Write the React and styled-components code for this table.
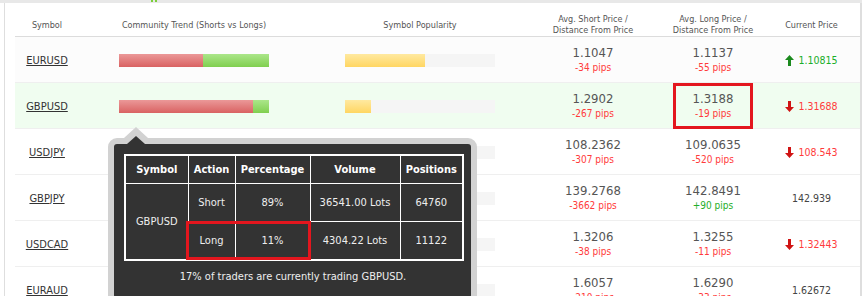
import React from "react";
import styled, { createGlobalStyle } from "styled-components";

const GlobalStyle = createGlobalStyle`
  body {
    margin: 0;
    background: #fff;
    font-family: "DejaVu Sans Condensed", "DejaVu Sans", sans-serif;
    font-stretch: condensed;
    overflow: hidden;
  }
`;

const Page = styled.div`
  position: relative;
  width: 868px;
  height: 296px;
  overflow: hidden;
  background: #fff;
`;

const TopBand = styled.div`
  position: relative;
  width: 862px;
  height: 3px;
  background: #e8e8e8;
`;

const GreenTick = styled.span`
  position: absolute;
  top: 0;
  left: ${(p) => p.left}px;
  width: 2px;
  height: 2px;
  background: #7ccf3a;
`;

const Panel = styled.div`
  box-sizing: border-box;
  margin-left: 4px;
  width: 858px;
  height: 293px;
  border-left: 1px solid #dedede;
  border-right: 2px solid #dedede;
  padding-left: 10px;
`;

const cols = "64px 230px 222px 124px 116px 81px";

const HeaderRow = styled.div`
  display: grid;
  grid-template-columns: ${cols};
  height: 22px;
  padding-top: 11px;
  border-bottom: 1px solid #dcdcdc;
  align-items: center;
  color: #555;
  font-size: 9px;
  line-height: 11px;
  text-align: center;
`;

const Row = styled.div`
  display: grid;
  grid-template-columns: ${cols};
  height: 45px;
  border-bottom: 1px solid #efefef;
  align-items: center;
  background: ${(p) => p.bg || "#fff"};
`;

const Cell = styled.div`
  display: flex;
  justify-content: center;
  align-items: center;
  height: 100%;
`;

const SymbolLink = styled.a`
  color: #333;
  font-size: 11px;
  text-decoration: underline;
`;

const Bar = styled.div`
  display: flex;
  width: 150px;
  height: 13px;
  background: ${(p) => (p.track ? "#f5f5f5" : "transparent")};
`;

const Part = styled.div`
  height: 100%;
  background: ${(p) =>
    p.kind === "short"
      ? "linear-gradient(#eb9898, #d96262)"
      : p.kind === "long"
      ? "linear-gradient(#abe68a, #80cf4f)"
      : "linear-gradient(#ffe9a0, #ffd662)"};
`;

const PriceBox = styled.div`
  box-sizing: border-box;
  display: flex;
  flex-direction: column;
  align-items: center;
  justify-content: center;
  width: 80px;
  height: 46px;
  margin-top: ${(p) => (p.marked ? "-1px" : "0")};
  border: 3px solid ${(p) => (p.marked ? "#e3161e" : "transparent")};
`;

const Price = styled.div`
  color: #555;
  font-size: 13px;
  line-height: 16px;
`;

const Pips = styled.div`
  color: ${(p) => (p.up ? "#1fae2a" : "#ff3b3b")};
  font-size: 10px;
  line-height: 14px;
`;

const Current = styled.div`
  display: flex;
  align-items: center;
  gap: 4px;
  font-size: 10.5px;
  color: ${(p) => (p.dir === "up" ? "#1aae2a" : p.dir === "down" ? "#ff3b3b" : "#444")};
`;

const Arrow = ({ dir }) => (
  <svg width="9" height="11" viewBox="0 0 9 11">
    {dir === "up" ? (
      <path d="M4.5 0 L9 5 H6 V11 H3 V5 H0 Z" fill="#1b8a1e" />
    ) : (
      <path d="M4.5 11 L9 6 H6 V0 H3 V6 H0 Z" fill="#d01414" />
    )}
  </svg>
);

const Tooltip = styled.div`
  position: absolute;
  left: 108px;
  top: 138px;
  width: 338px;
  padding: 10px 9px 14px 10px;
  box-sizing: content-box;
  background: #333;
  border: 6px solid #d2d2d2;
  border-radius: 9px;
  color: #eee;
  &::before {
    content: "";
    position: absolute;
    left: 10px;
    top: -17px;
    border: 12px solid transparent;
    border-top: 0;
    border-bottom: 11px solid #d2d2d2;
  }
  &::after {
    content: "";
    position: absolute;
    left: 13px;
    top: -8px;
    border: 9px solid transparent;
    border-top: 0;
    border-bottom: 8px solid #333;
  }
`;

const TipTableWrap = styled.div`
  position: relative;
`;

const TipTable = styled.table`
  border-collapse: collapse;
  border: 2px solid #fff;
  width: 338px;
  table-layout: fixed;
  font-size: 11px;
  text-align: center;
  th,
  td {
    border: 1px solid #fff;
    padding: 0;
  }
  th {
    height: 27px;
    color: #fff;
    font-weight: bold;
  }
  td {
    height: 37px;
  }
`;

const Marker = styled.div`
  position: absolute;
  left: 62px;
  top: 67px;
  width: 125px;
  height: 39px;
  box-sizing: border-box;
  border: 3px solid #e3161e;
`;

const TipFooter = styled.div`
  margin-top: 9px;
  text-align: center;
  font-size: 11px;
  line-height: 14px;
`;

const rows = [
  { sym: "EURUSD", trend: 56, pop: 53, short: "1.1047", sp: "-34 pips", long: "1.1137", lp: "-55 pips", cur: "1.10815", dir: "up", bg: "#fcfcfc" },
  { sym: "GBPUSD", trend: 89, pop: 17, short: "1.2902", sp: "-267 pips", long: "1.3188", lp: "-19 pips", cur: "1.31688", dir: "down", bg: "#f0fdf0", marked: true },
  { sym: "USDJPY", trend: 62, pop: 45, short: "108.2362", sp: "-307 pips", long: "109.0635", lp: "-520 pips", cur: "108.543", dir: "down" },
  { sym: "GBPJPY", trend: 70, pop: 30, short: "139.2768", sp: "-3662 pips", long: "142.8491", lp: "+90 pips", lpUp: true, cur: "142.939" },
  { sym: "USDCAD", trend: 48, pop: 25, short: "1.3206", sp: "-38 pips", long: "1.3255", lp: "-11 pips", cur: "1.32443", dir: "down" },
  { sym: "EURAUD", trend: 79, pop: 14, short: "1.6057", sp: "-210 pips", long: "1.6290", lp: "-33 pips", cur: "1.62672" },
];

export default function App() {
  return (
    <Page>
      <GlobalStyle />
      <TopBand>
        <GreenTick left={151} />
        <GreenTick left={155} />
      </TopBand>
      <Panel>
        <HeaderRow>
          <div>Symbol</div>
          <div>Community Trend (Shorts vs Longs)</div>
          <div>Symbol Popularity</div>
          <div>Avg. Short Price /<br />Distance From Price</div>
          <div>Avg. Long Price /<br />Distance From Price</div>
          <div>Current Price</div>
        </HeaderRow>
        {rows.map((r) => (
          <Row key={r.sym} bg={r.bg}>
            <Cell>
              <SymbolLink>{r.sym}</SymbolLink>
            </Cell>
            <Cell>
              <Bar>
                <Part kind="short" style={{ width: `${r.trend}%` }} />
                <Part kind="long" style={{ width: `${100 - r.trend}%` }} />
              </Bar>
            </Cell>
            <Cell>
              <Bar track>
                <Part kind="pop" style={{ width: `${r.pop}%` }} />
              </Bar>
            </Cell>
            <Cell>
              <PriceBox>
                <Price>{r.short}</Price>
                <Pips>{r.sp}</Pips>
              </PriceBox>
            </Cell>
            <Cell>
              <PriceBox marked={r.marked}>
                <Price>{r.long}</Price>
                <Pips up={r.lpUp}>{r.lp}</Pips>
              </PriceBox>
            </Cell>
            <Cell>
              <Current dir={r.dir}>
                {r.dir && <Arrow dir={r.dir} />}
                {r.cur}
              </Current>
            </Cell>
          </Row>
        ))}
      </Panel>
      <Tooltip>
        <TipTableWrap>
          <TipTable>
            <colgroup>
              <col style={{ width: 63 }} />
              <col style={{ width: 47 }} />
              <col style={{ width: 75 }} />
              <col style={{ width: 90 }} />
              <col style={{ width: 63 }} />
            </colgroup>
            <thead>
              <tr>
                <th>Symbol</th>
                <th>Action</th>
                <th>Percentage</th>
                <th>Volume</th>
                <th>Positions</th>
              </tr>
            </thead>
            <tbody>
              <tr>
                <td rowSpan={2}>GBPUSD</td>
                <td>Short</td>
                <td>89%</td>
                <td>36541.00 Lots</td>
                <td>64760</td>
              </tr>
              <tr>
                <td>Long</td>
                <td>11%</td>
                <td>4304.22 Lots</td>
                <td>11122</td>
              </tr>
            </tbody>
          </TipTable>
          <Marker />
        </TipTableWrap>
        <TipFooter>17% of traders are currently trading GBPUSD.</TipFooter>
      </Tooltip>
    </Page>
  );
}
